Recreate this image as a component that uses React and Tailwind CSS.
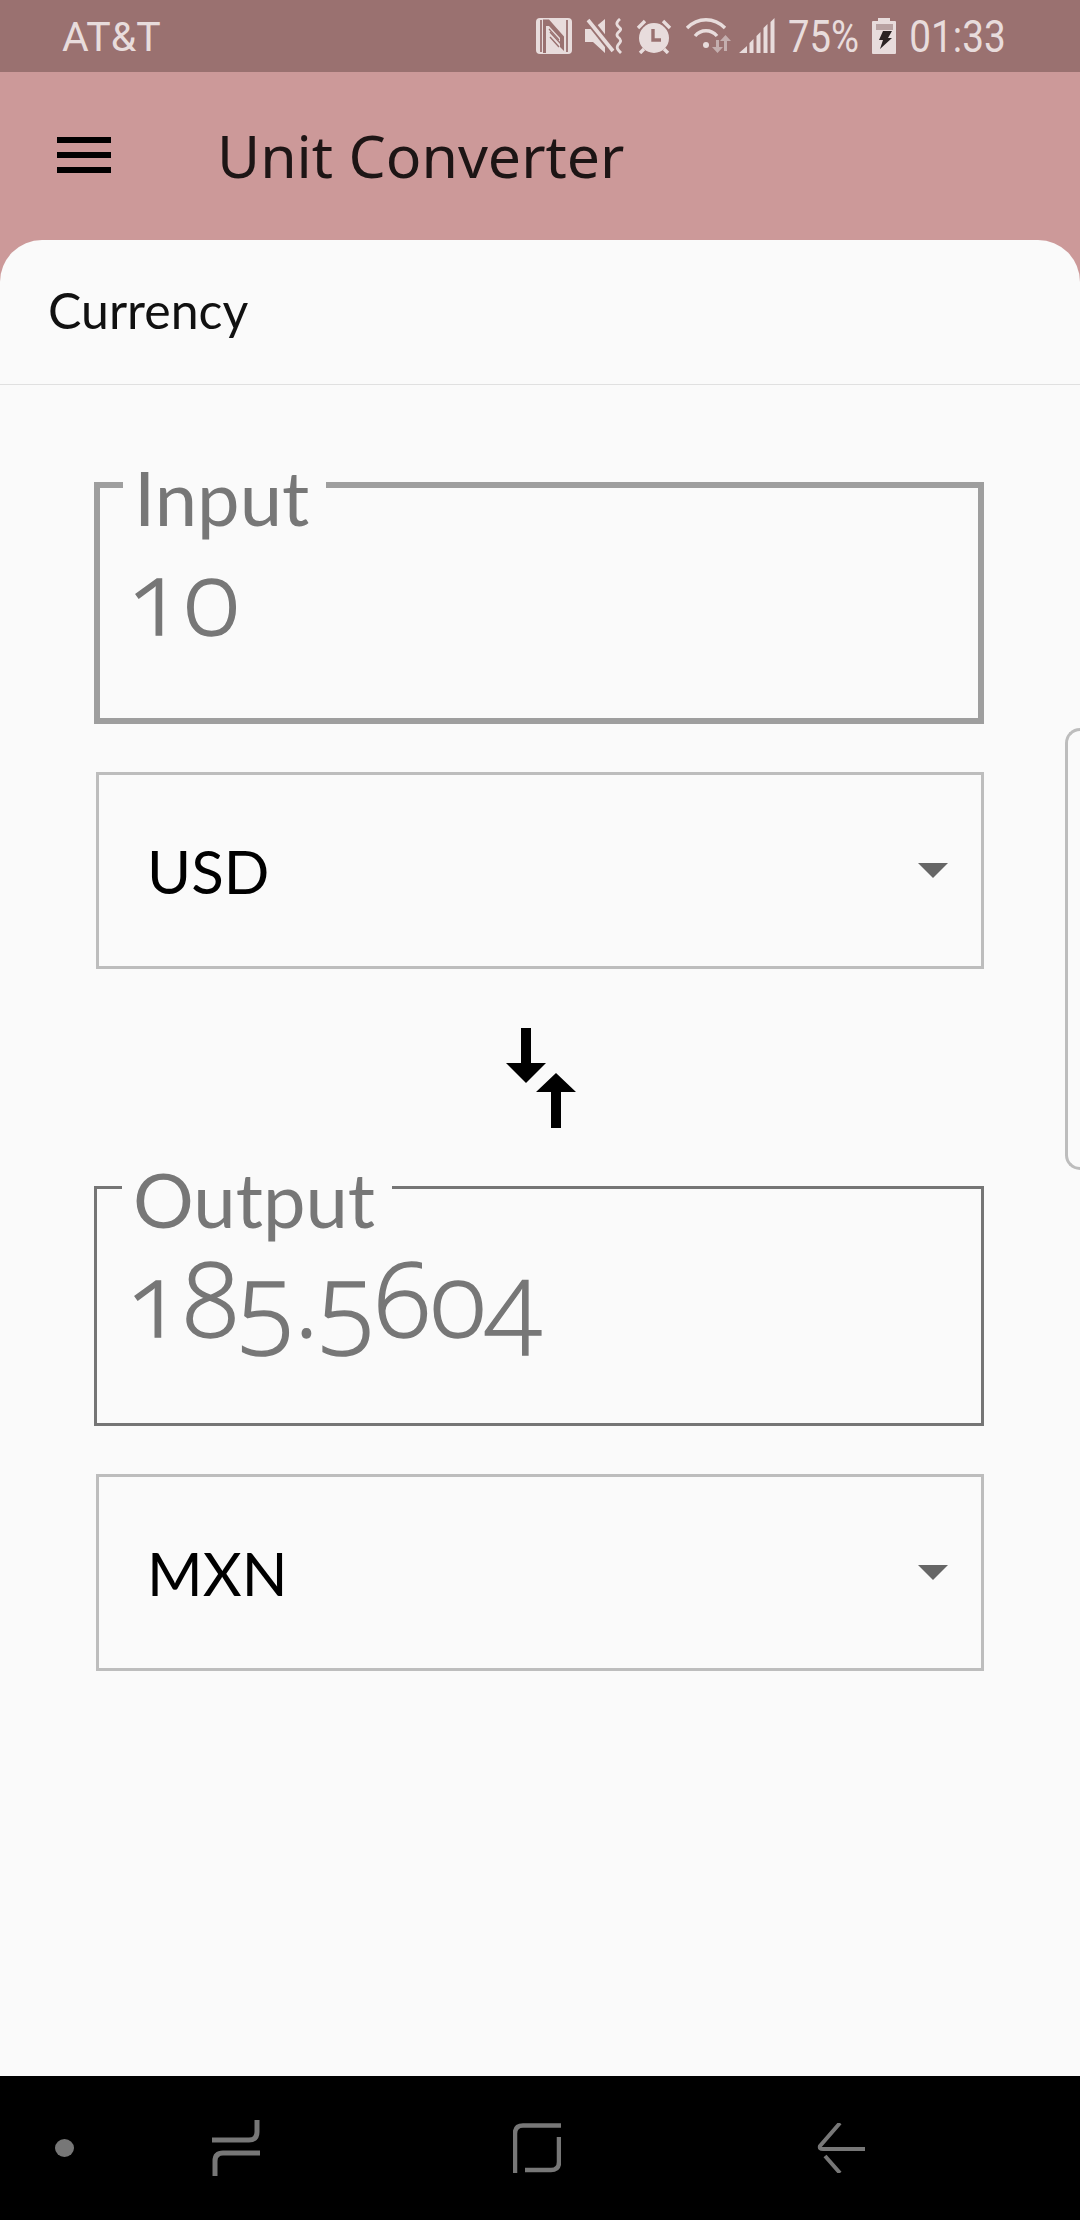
const G = "#e8dcdc";
const D = "#9a7170";

function StatusIcons() {
  return (
    <>
      <svg width="36" height="36" viewBox="0 0 36 36">
        <rect x="0" y="0" width="36" height="36" rx="4" fill={G} />
        <path d="M5 2v32M31 2v32" stroke={D} strokeWidth="1.8" />
        <path d="M7 1.500h6l15 17V33l-4-4V20L13 8H10v27H7z" fill={D} />
        <path d="M14 19l9 10M14 14l11 12" stroke={D} strokeWidth="1.400" />
        <path d="M13 11l10 11" stroke={D} strokeWidth="1.200" />
      </svg>
      <svg width="38" height="36" viewBox="0 0 38 36" className="ml-[13px]">
        <path d="M0 11h8L20 1v34L8 24H0z" fill={G} />
        <path d="M2 0l27 34" stroke={D} strokeWidth="8" />
        <path d="M3 2l25 31" stroke={G} strokeWidth="3.600" />
        <path d="M35 1c-6 5-2 7 0 9 3 3-6 5-2 9 4 3 3 5 0 8-2 3 0 5 3 8" stroke={G} strokeWidth="2.800" fill="none" />
      </svg>
      <svg width="36" height="36" viewBox="0 0 36 36" className="ml-[13px]">
        <circle cx="18" cy="20" r="15" fill={G} />
        <path d="M17 11v11h8" stroke={D} strokeWidth="3.400" fill="none" />
        <path d="M2 10l7-7M34 10l-7-7M4 35l4-4M32 35l-4-4" stroke={G} strokeWidth="3.400" />
      </svg>
      <svg width="48" height="36" viewBox="0 0 48 36" className="ml-[13px]">
        <path d="M2 10c11-11 27-11 38 0" stroke={G} strokeWidth="3.400" fill="none" />
        <path d="M10 18c6-7 16-7 22 0" stroke={G} strokeWidth="3.400" fill="none" />
        <circle cx="21" cy="27" r="3" fill={G} />
        <path d="M31 22h3v7h4l-5.500 6-5.500-6h4z" fill="#c4aeae" />
        <path d="M42 33h-3v-10h-4l5.500-6 5.500 6h-4z" fill="#c4aeae" />
      </svg>
      <svg width="36" height="36" viewBox="0 0 36 36" className="ml-[6px]">
        <path d="M0 35l8-7v7zM10.500 35V25l4-4v14zM17.500 35V18l4-4v21zM24.500 35V10l4-4v29zM31.500 35V4l4-4v35z" fill={G} />
      </svg>
    </>
  );
}

function Battery() {
  return (
    <svg width="24" height="36" viewBox="0 0 24 36" className="ml-[13px]">
      <path d="M6 0h12v3h5q1 0 1 1v31q0 1-1 1H1q-1 0-1-1V4q0-1 1-1h5z" fill={G} />
      <path d="M4 6h17v6H4z" fill="#b9a2a2" />
      <path d="M11 13h9l-4 7h4L8 31l3-9H7z" fill="#2b2323" />
    </svg>
  );
}

function Field({ label, value, thick }) {
  const border = thick ? "border-[6px] border-[#9e9e9e]" : "border-[3px] border-[#757575]";
  const legendOffset = thick ? "ml-[23px]" : "ml-[25px]";
  const valueOffset = thick ? "pl-[28px]" : "pl-[30px]";
  return (
    <fieldset className={`${border} h-[287px] m-0 min-w-0`}>
      <legend className={`${legendOffset} pl-[11px] pr-[17px] pt-[24px] text-[76px] leading-[72px] font-normal text-[#777777] [font-family:Lato,sans-serif]`}>
        {label}
      </legend>
      <div className={`${valueOffset} mt-[12px] text-[104px] leading-[100px] font-light text-[#777777] oldstyle-nums [-webkit-text-stroke:1.5px_#777777] [font-family:'Open_Sans',sans-serif]`}>
        {value}
      </div>
    </fieldset>
  );
}

function Select({ value }) {
  return (
    <div className="mt-[48px] ml-[2px] h-[197px] border-[3px] border-[#bdbdbd] flex items-center justify-between pl-[48px] pr-[33px] text-[60px] text-black [font-family:Lato,sans-serif]">
      <span>{value}</span>
      <span className="w-0 h-0 border-l-[15px] border-r-[15px] border-t-[15px] border-l-transparent border-r-transparent border-t-[#666666]" />
    </div>
  );
}

export default function App() {
  return (
    <div className="w-[1080px] h-[2220px] flex flex-col bg-[#cc9999] overflow-hidden relative">
      <div className="h-[72px] bg-[#9a7170] flex items-center justify-between pl-[62px] pr-[75px] text-[41px] text-[#e8dcdc] [font-family:Roboto,sans-serif]">
        <span className="pt-[4px]">AT&amp;T</span>
        <div className="flex items-center">
          <StatusIcons />
          <span className="ml-[13px] w-[71px] pt-[2px] flex justify-center scale-x-[0.85] whitespace-nowrap text-[45px]">75%</span>
          <Battery />
          <span className="ml-[14px] w-[95px] pt-[2px] flex justify-center scale-x-[0.86] whitespace-nowrap text-[45px]">01:33</span>
        </div>
      </div>

      <div className="h-[168px] flex items-center pl-[57px] pb-[2px]">
        <svg width="54" height="36" viewBox="0 0 54 36">
          <path d="M0 0h54v6H0zM0 15h54v6H0zM0 30h54v6H0z" fill="#000" />
        </svg>
        <span className="ml-[106px] text-[59px] text-[#1d1515] [font-family:'Noto_Sans',sans-serif]">Unit Converter</span>
      </div>

      <div className="flex-1 bg-[#fafafa] rounded-t-[42px] flex flex-col min-h-0">
        <div className="h-[145px] border-b border-[#e0e0e0] flex items-center pl-[48px] text-[50px] text-[#111] [font-family:Lato,sans-serif] pb-[3px]">
          Currency
        </div>
        <div className="pl-[94px] w-[984px] pt-[52px] flex-1">
          <Field label="Input" value="10" thick />
          <Select value="USD" />
          <div className="h-[170px] pt-[48px] pl-[4px] flex items-center justify-center">
            <svg width="70" height="100" viewBox="505 1027 70 100">
              <path d="M520 1027h10v35h15l-20 20-20-20h15zM550 1127v-36h-15l20-19 20 19h-15v36z" fill="#000" />
            </svg>
          </div>
          <Field label="Output" value="185.5604" />
          <Select value="MXN" />
        </div>
        <div className="h-[144px] bg-black flex items-center pl-[55px]">
          <svg width="19" height="18" viewBox="0 0 19 18"><ellipse cx="9.500" cy="9" rx="9.500" ry="9" fill="#777" /></svg>
          <svg width="48" height="56" viewBox="0 0 48 56" className="ml-[138px]">
            <path d="M45 0v12q0 8-8 8H0M48 33H11q-8 0-8 8v15" stroke="#777" strokeWidth="5" fill="none" />
          </svg>
          <svg width="48" height="50" viewBox="0 0 48 50" className="ml-[253px]">
            <path d="M48 2.500H10q-8 0-8 8V50M46 14v25q0 8-8 8H12" stroke="#777" strokeWidth="4.500" fill="none" />
          </svg>
          <svg width="48" height="50" viewBox="0 0 48 50" className="ml-[256px]">
            <path d="M23 0L3 23q-1 3 3 3h42M8 33l15 17" stroke="#777" strokeWidth="4" fill="none" />
          </svg>
        </div>
      </div>

      <div className="absolute right-0 top-[728px] w-[15px] h-[442px] border-l-[3px] border-y-[3px] border-[#bdbdbd] rounded-l-[16px]" />
    </div>
  );
}
